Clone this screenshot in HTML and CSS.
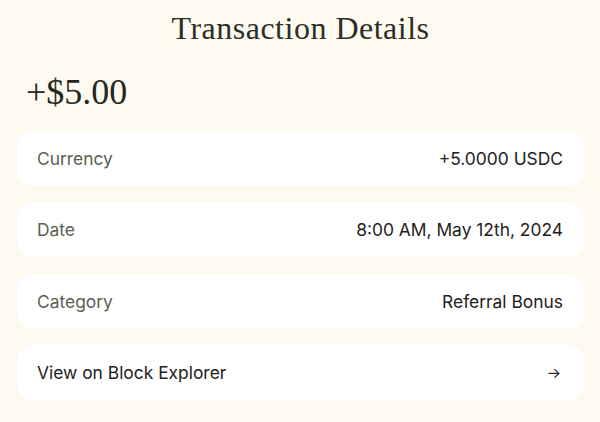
FILE: index.html
```html
<!DOCTYPE html>
<html>
<head>
<meta charset="utf-8">
<link rel="stylesheet" href="styles.css">
</head>
<body>
<main class="page">
  <h1 class="title">Transaction Details</h1>
  <div class="amount">+$5.00</div>
  <div class="rows">
    <div class="row"><span class="label">Currency</span><span class="value">+5.0000 USDC</span></div>
    <div class="row"><span class="label">Date</span><span class="value">8:00 AM, May 12th, 2024</span></div>
    <div class="row"><span class="label">Category</span><span class="value">Referral Bonus</span></div>
    <a class="row link" href="#"><span class="link-text">View on Block Explorer</span><span class="arrow">→</span></a>
  </div>
</main>
</body>
</html>
```

FILE: styles.css
```css
html, body {
  margin: 0;
  padding: 0;
  background: #fefaef;
}
.page {
  width: 600px;
  height: 422px;
  box-sizing: border-box;
  padding: 8px 16px 0 17px;
  font-family: Inter, "Noto Sans", sans-serif;
}
.title {
  margin: 0;
  text-align: center;
  font-family: "Liberation Serif", "DejaVu Serif", serif;
  font-weight: 400;
  font-size: 32px;
  line-height: 40px;
  letter-spacing: 0.5px;
  color: #2b2f27;
}
.amount {
  margin: 24px 0 0 9px;
  font-family: "Liberation Serif", "DejaVu Serif", serif;
  font-size: 36px;
  line-height: 40px;
  color: #24281f;
}
.rows {
  margin-top: 19px;
  display: flex;
  flex-direction: column;
  gap: 16.3px;
}
.row {
  height: 55px;
  box-sizing: border-box;
  padding: 0 21px 0 20px;
  background: #ffffff;
  border-radius: 16px;
  display: flex;
  align-items: center;
  justify-content: space-between;
  font-size: 17.4px;
  text-decoration: none;
}
.label {
  color: #5b6052;
}
.value, .link-text {
  color: #1f211c;
}
.arrow {
  color: #1f211c;
  font-size: 15px;
  margin-right: 2px;
}
```
